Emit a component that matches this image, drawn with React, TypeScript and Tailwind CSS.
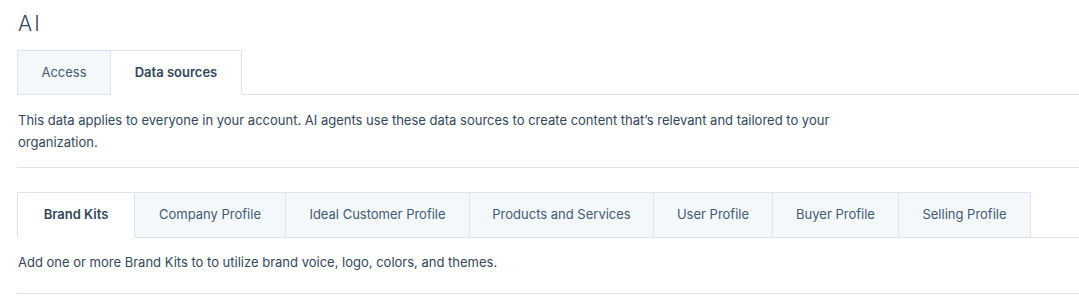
const topTabs = [
  { label: 'Access', w: 'w-[93px]', active: false },
  { label: 'Data sources', w: 'w-[132px]', active: true },
]

const sourceTabs = [
  { label: 'Brand Kits', w: 'w-[117px]', active: true },
  { label: 'Company Profile', w: 'w-[151px]', active: false },
  { label: 'Ideal Customer Profile', w: 'w-[184px]', active: false },
  { label: 'Products and Services', w: 'w-[184px]', active: false },
  { label: 'User Profile', w: 'w-[119px]', active: false },
  { label: 'Buyer Profile', w: 'w-[126px]', active: false },
  { label: 'Selling Profile', w: 'w-[133px]', active: false },
]

interface Tab {
  label: string
  w: string
  active: boolean
}

function TabRow({ tabs, height }: { tabs: Tab[]; height: string }) {
  return (
    <div className={`flex ${height}`}>
      {tabs.map((tab, i) => (
        <div
          key={tab.label}
          className={`${tab.w} flex items-center justify-center border-t border-l border-[#dfe3eb] text-[13px] ${
            i === tabs.length - 1 ? 'border-r' : ''
          } ${
            tab.active
              ? 'bg-white border-b border-b-white font-semibold text-[#33475b]'
              : 'bg-[#f5f8fa] border-b font-normal text-[#425b76]'
          }`}
        >
          {tab.label}
        </div>
      ))}
      <div className="flex-1 border-b border-[#dfe3eb]" />
    </div>
  )
}

export default function App() {
  return (
    <div
      className="min-h-[305px] bg-white pl-[17px] text-[#33475b]"
      style={{ fontFamily: 'Inter, "Noto Sans", sans-serif' }}
    >
      <h1 className="pt-[11px] pl-px text-[21px] leading-[26px] font-light tracking-widest">AI</h1>

      <div className="mt-[13px]">
        <TabRow tabs={topTabs} height="h-[45px]" />
      </div>

      <p className="mt-[14px] max-w-[850px] pl-px text-[13px] leading-[22px]">
        This data applies to everyone in your account. AI agents use these data sources to create content that’s
        relevant and tailored to your organization.
      </p>

      <div className="mt-[14px] border-t border-[#dfe3eb]" />

      <div className="mt-[24px]">
        <TabRow tabs={sourceTabs} height="h-[46px]" />
      </div>

      <p className="mt-[13px] pl-px text-[13px] leading-[22px]">
        Add one or more Brand Kits to to utilize brand voice, logo, colors, and themes.
      </p>

      <div className="mt-[20px] border-t border-[#dfe3eb]" />
    </div>
  )
}
